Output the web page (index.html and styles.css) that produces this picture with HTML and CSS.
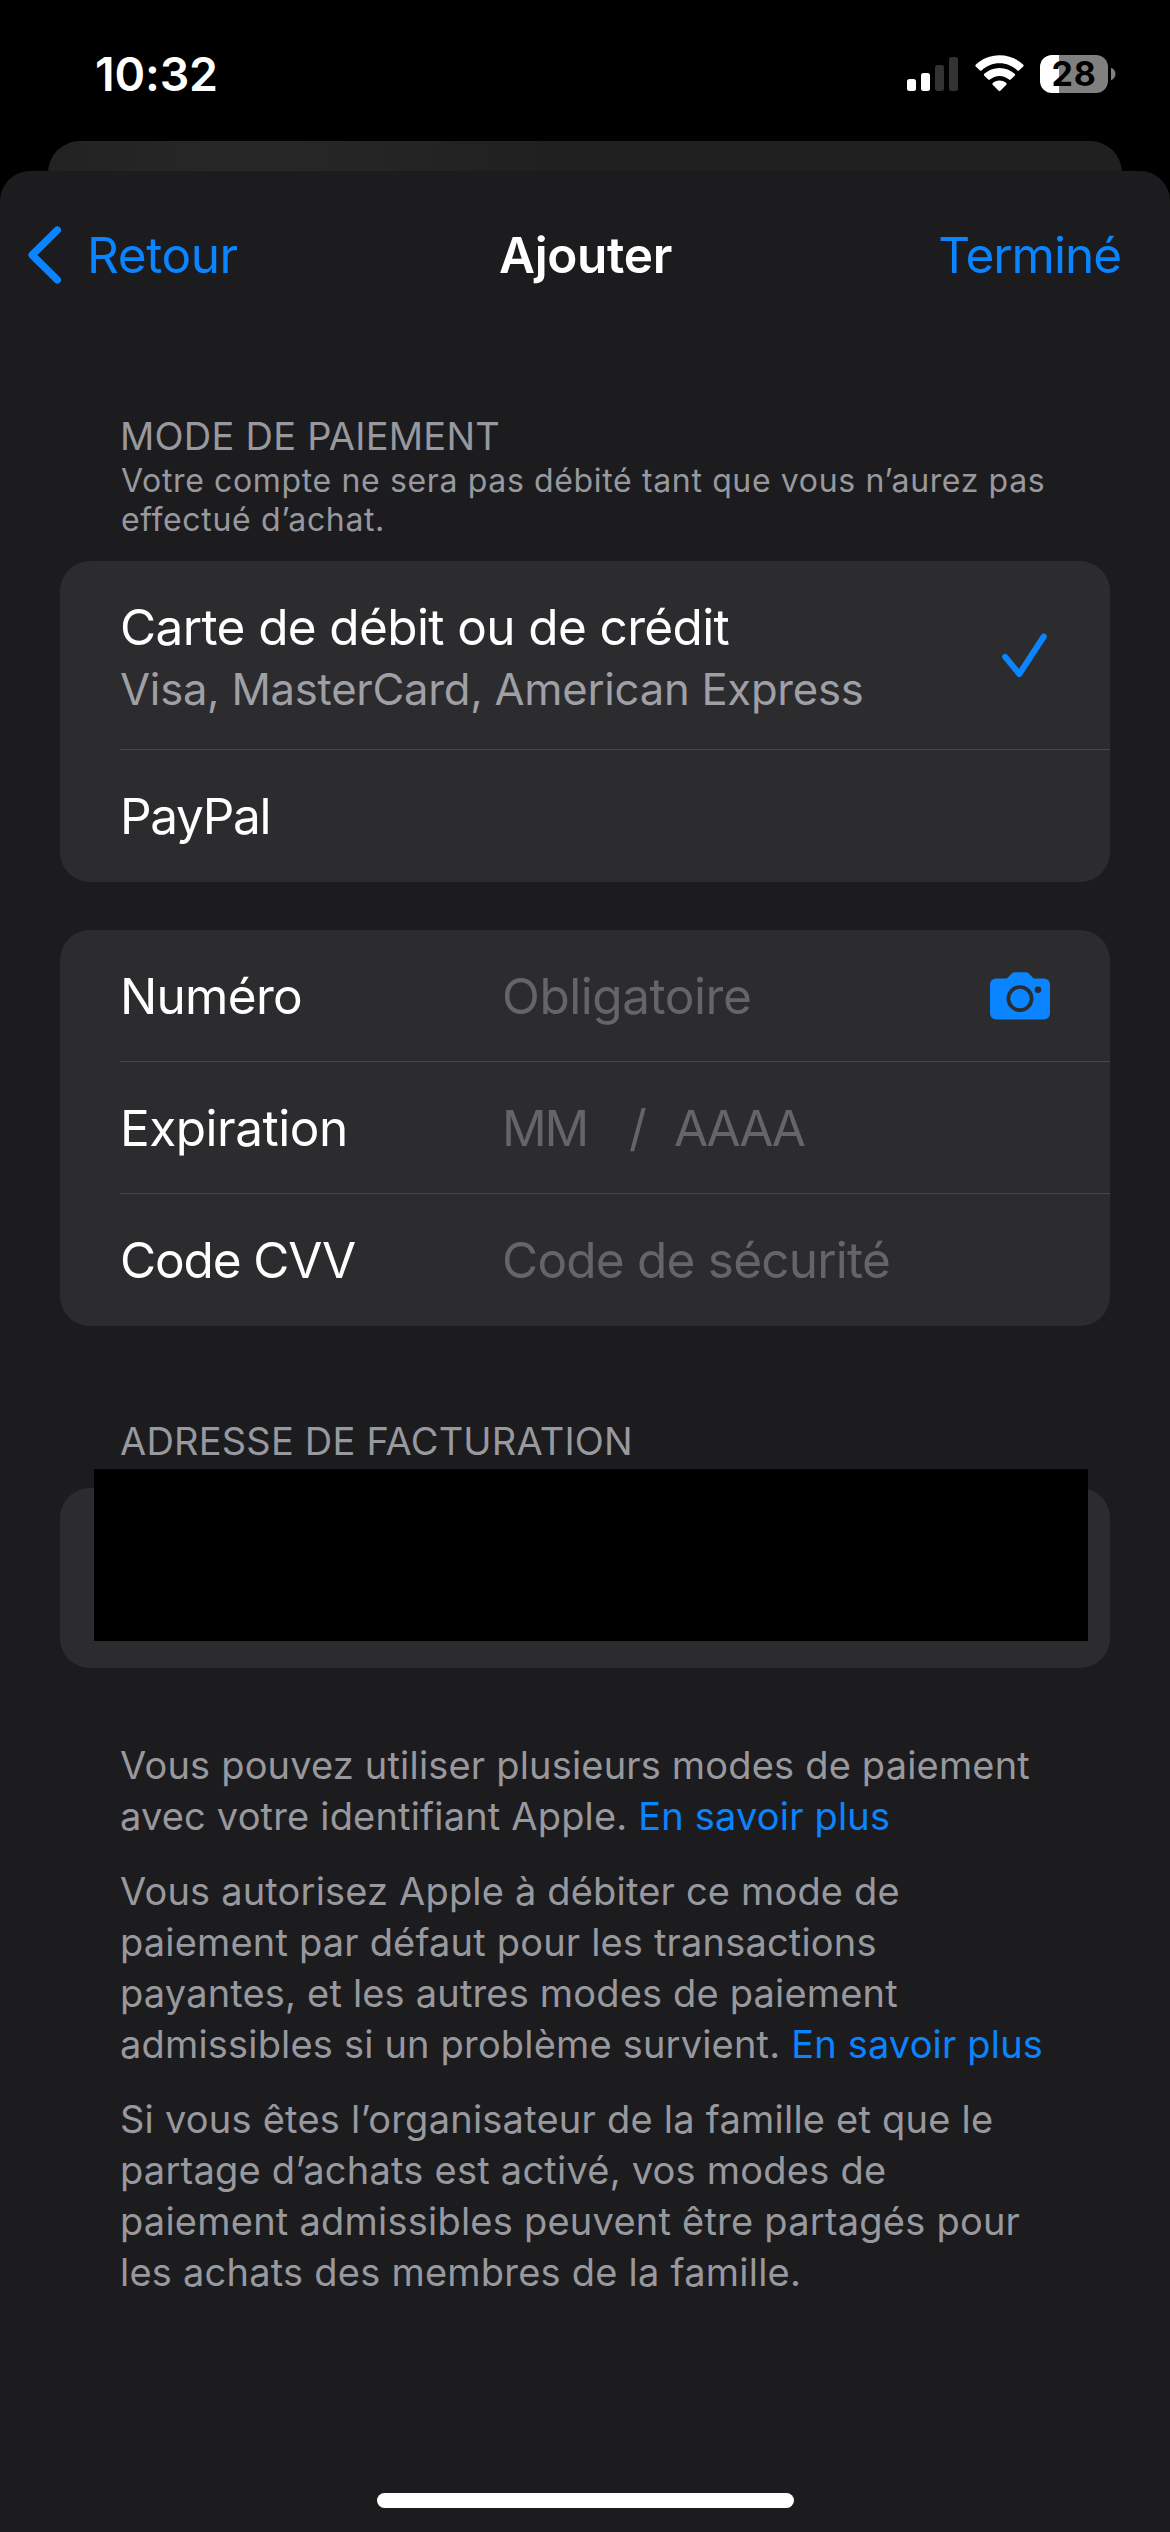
FILE: index.html
```html
<!DOCTYPE html>
<html lang="fr">
<head>
<meta charset="utf-8">
<title>Ajouter</title>
<link rel="stylesheet" href="styles.css">
</head>
<body>
<div class="screen">
  <header class="status">
    <span class="time">10:32</span>
    <div class="indicators">
      <svg class="signal" width="46" height="34" viewBox="0 0 46 34" aria-hidden="true">
        <rect x="0" y="22" width="9" height="12" rx="2.5" fill="#fff"/>
        <rect x="14" y="16" width="9" height="18" rx="2.5" fill="#fff"/>
        <rect x="28" y="8" width="9" height="26" rx="2.5" fill="#333"/>
        <rect x="42" y="0" width="9" height="34" rx="2.5" fill="#333"/>
      </svg>
      <svg class="wifi" width="49" height="37" viewBox="0 0 49 37" aria-hidden="true">
        <path fill="#fff" d="M24.5 0.3C33.8 0.3 42 3.8 48.1 9.6C48.8 10.3 48.8 11 48.2 11.6L44 15.5C43.6 15.9 42.9 15.9 42.4 15.4C37.7 11 31.4 8.3 24.5 8.3C17.6 8.3 11.3 11 6.6 15.4C6.1 15.9 5.4 15.9 5 15.5L0.8 11.6C0.2 11 0.2 10.3 0.9 9.6C7 3.8 15.2 0.3 24.5 0.3Z"/>
        <path fill="#fff" d="M24.5 12.9C30.4 12.9 35.7 15.1 39.7 18.8C40.3 19.4 40.3 20.1 39.7 20.7L35.7 24.6C35.2 25 34.6 25 34.1 24.6C31.5 22.3 28.2 20.9 24.5 20.9C20.8 20.9 17.5 22.3 14.9 24.6C14.4 25 13.8 25 13.3 24.6L9.3 20.7C8.7 20.1 8.7 19.4 9.3 18.8C13.3 15.1 18.6 12.9 24.5 12.9Z"/>
        <path fill="#fff" d="M24.5 25.6C27.2 25.6 29.6 26.6 31.3 28.1C31.8 28.6 31.8 29.2 31.3 29.7L25.3 35.8C24.8 36.3 24.2 36.3 23.7 35.8L17.7 29.7C17.2 29.2 17.2 28.6 17.7 28.1C19.4 26.6 21.8 25.6 24.5 25.6Z"/>
      </svg>
      <div class="battery">
        <span class="battery-body">28</span>
        <svg width="5" height="14" viewBox="0 0 5 14" aria-hidden="true"><path fill="#808080" d="M0 .8C2.8 1.8 4.5 4.2 4.5 7S2.8 12.2 0 13.2Z"/></svg>
      </div>
    </div>
  </header>

  <div class="backsheet"></div>

  <main class="sheet">
    <nav class="nav">
      <a class="back">
        <svg width="33" height="58" viewBox="0 0 33 58" aria-hidden="true"><path d="M29.3 4.2L4.2 29L29.3 53.8" fill="none" stroke="#0a84ff" stroke-width="7.4" stroke-linecap="round" stroke-linejoin="round"/></svg>
        <span class="back-label">Retour</span>
      </a>
      <h1 class="title">Ajouter</h1>
      <a class="done">Terminé</a>
    </nav>

    <section class="group-head">
      <h2 class="heading">MODE DE PAIEMENT</h2>
      <p class="caption">Votre compte ne sera pas débité tant que vous n’aurez pas<br>effectué d’achat.</p>
    </section>

    <ul class="card">
      <li class="row row-tall">
        <div class="labels">
          <span class="label label-card">Carte de débit ou de crédit</span>
          <span class="sub">Visa, MasterCard, American Express</span>
        </div>
        <svg class="check" width="45" height="45" viewBox="0 0 45 45" aria-hidden="true"><path d="M3.2 23.9L17.3 41L41.8 3.5" fill="none" stroke="#0a84ff" stroke-width="6" stroke-linecap="round" stroke-linejoin="round"/></svg>
      </li>
      <li class="row"><span class="label label-paypal">PayPal</span></li>
    </ul>

    <ul class="card card-form">
      <li class="row field">
        <span class="label">Numéro</span>
        <span class="hint">Obligatoire</span>
        <svg class="camera" width="60" height="48" viewBox="0 0 60 48" aria-hidden="true">
          <path fill="#0a84ff" d="M7 6.5H15.5C16.8 6.5 17.4 6.1 18.2 5.2L21 2.2C22.3 .8 23.3 .2 25.2 .2H35.4C37.3 .2 38.3 .8 39.6 2.2L42.4 5.2C43.2 6.1 43.8 6.5 45.1 6.5H53C57.7 6.5 60 8.9 60 13.4V40.5C60 45 57.7 47.5 53 47.5H7C2.3 47.5 0 45 0 40.5V13.4C0 8.9 2.3 6.5 7 6.5Z"/>
          <circle cx="30" cy="26.6" r="11.6" fill="none" stroke="#2c2c2e" stroke-width="3.7"/>
          <circle cx="48" cy="17.8" r="3.3" fill="#2c2c2e"/>
        </svg>
      </li>
      <li class="row field">
        <span class="label label-exp">Expiration</span>
        <span class="hint date"><span>MM</span><span>/</span><span>AAAA</span></span>
      </li>
      <li class="row field">
        <span class="label label-cvv">Code CVV</span>
        <span class="hint hint-code">Code de sécurité</span>
      </li>
    </ul>

    <h2 class="heading heading-address">ADRESSE DE FACTURATION</h2>
    <div class="card card-address"><div class="redaction"></div></div>

    <footer class="notes">
      <p>Vous pouvez utiliser plusieurs modes de paiement<br>avec votre identifiant Apple. <a class="link">En savoir plus</a></p>
      <p>Vous autorisez Apple à débiter ce mode de<br>paiement par défaut pour les transactions<br>payantes, et les autres modes de paiement<br>admissibles si un problème survient. <a class="link">En savoir plus</a></p>
      <p class="note-family">Si vous êtes l’organisateur de la famille et que le<br>partage d’achats est activé, vos modes de<br>paiement admissibles peuvent être partagés pour<br>les achats des membres de la famille.</p>
    </footer>

    <div class="home-bar"></div>
  </main>
</div>
</body>
</html>
```
FILE: styles.css
```css
* { box-sizing: border-box; margin: 0; padding: 0; }

body {
  width: 1170px;
  height: 2532px;
  overflow: hidden;
  background: #000;
  color: #fff;
  font-family: Inter, "Liberation Sans", sans-serif;
}

.screen { display: flex; flex-direction: column; height: 2532px; }

/* Status bar */
.status {
  display: flex;
  justify-content: space-between;
  align-items: flex-start;
  height: 141px;
  padding: 46px 54px 0 95px;
}
.time { font-size: 46.5px; font-weight: 600; line-height: 56px; letter-spacing: -0.16px; }
.indicators { display: flex; align-items: flex-start; padding-top: 9px; }
.signal { margin: 2px 22px 0 0; overflow: visible; }
.wifi { margin-right: 16px; }
.battery { display: flex; align-items: center; gap: 3px; }
.battery-body {
  width: 68px;
  height: 38px;
  border-radius: 12px;
  background: linear-gradient(90deg, #fff 19px, #808080 19px);
  color: #000;
  font-size: 34px;
  font-weight: 650;
  line-height: 38px;
  letter-spacing: 0.8px;
  text-align: center;
}

.backsheet {
  height: 60px;
  margin: 0 48px -30px;
  border-radius: 32px 32px 0 0;
  background: linear-gradient(90deg, #222 0, #272727 170px, #272727 240px, #202021 500px, #202021 100%);
}

/* Front sheet */
.sheet {
  display: flex;
  flex-direction: column;
  flex: 1;
  z-index: 1;
  border-radius: 30px 30px 0 0;
  background: #1c1c1e;
}
.nav {
  display: grid;
  grid-template-columns: 1fr auto 1fr;
  align-items: center;
  height: 168px;
  padding: 0 49px 0 28px;
  font-size: 49.5px;
  line-height: 60px;
}
.back { display: flex; align-items: center; gap: 26px; color: #0a84ff; letter-spacing: -0.41px; }
.title { padding-left: 22px; font-size: 49.5px; font-weight: 600; letter-spacing: -0.35px; }
.done { justify-self: end; color: #0a84ff; letter-spacing: -1.02px; }

.group-head { display: flex; flex-direction: column; gap: 2px; padding: 74px 60px 22px 0; }
.heading {
  padding-left: 120px;
  color: #98989f;
  font-size: 38px;
  font-weight: 400;
  line-height: 46px;
  letter-spacing: 0.23px;
}
.caption {
  padding-left: 121px;
  color: #98989f;
  font-size: 32px;
  line-height: 39px;
  letter-spacing: 0.64px;
  white-space: nowrap;
}

/* Grouped lists */
.card { margin: 0 60px; border-radius: 30px; background: #2c2c2e; list-style: none; }
.card-form { margin-top: 48px; }
.row {
  position: relative;
  display: flex;
  align-items: center;
  justify-content: space-between;
  height: 132px;
  padding: 0 60px;
}
.row-tall { height: 189px; padding-right: 63px; }
.row:not(:last-child)::after {
  content: "";
  position: absolute;
  right: 0;
  bottom: 0;
  left: 60px;
  height: 1px;
  background: #464649;
}
.labels { display: flex; flex-direction: column; gap: 5px; align-self: flex-start; padding-top: 36px; }
.label { font-size: 49.5px; line-height: 60px; letter-spacing: -0.72px; }
.label-card { letter-spacing: -0.62px; }
.label-paypal { letter-spacing: -1.31px; }
.label-exp { letter-spacing: -0.49px; }
.label-cvv { letter-spacing: -1.14px; }
.sub { color: #9f9fa6; font-size: 43.6px; line-height: 55px; letter-spacing: -0.25px; }

.field { display: grid; grid-template-columns: 382px 1fr auto; }
.hint { color: #656569; font-size: 49.5px; line-height: 60px; letter-spacing: -0.45px; }
.hint-code { letter-spacing: -0.78px; }
.date { display: grid; grid-template-columns: 127px 45px auto; justify-content: start; letter-spacing: -2.3px; }

.heading-address { padding-top: 92px; padding-bottom: 24px; letter-spacing: 0.2px; }
.card-address { height: 180px; }
.redaction { position: relative; top: -19px; width: 994px; height: 172px; margin-left: 34px; background: #000; }

.notes {
  display: flex;
  flex-direction: column;
  gap: 24px;
  padding: 72px 60px 0 120px;
  color: #98989f;
  font-size: 38px;
  line-height: 51px;
  letter-spacing: 0.18px;
  white-space: nowrap;
}
.note-family { letter-spacing: 0.23px; }
.link { color: #0a84ff; }

.home-bar { width: 417px; height: 15px; margin: auto auto 24px; border-radius: 8px; background: #fff; }
```
